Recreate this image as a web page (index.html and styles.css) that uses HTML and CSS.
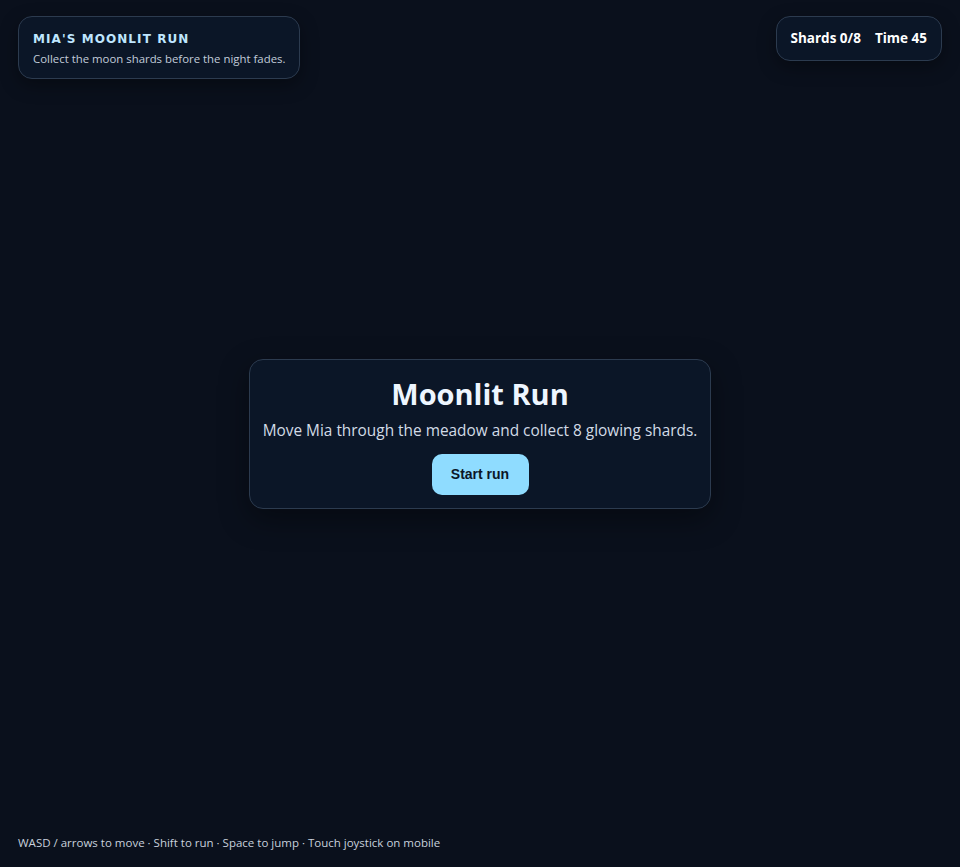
FILE: index.html
```html
<!DOCTYPE html>
<html lang="en">
<head>
<meta charset="utf-8">
<title>Mia's Moonlit Run</title>
<link rel="stylesheet" href="styles.css">
</head>
<body>
<div class="screen">
  <header class="hud">
    <div class="panel brand">
      <div class="brand-title">MIA'S MOONLIT RUN</div>
      <div class="brand-sub">Collect the moon shards before the night fades.</div>
    </div>
    <div class="panel stats">
      <span>Shards 0/8</span>
      <span>Time 45</span>
    </div>
  </header>
  <main class="stage">
    <div class="card">
      <h1 class="card-title">Moonlit Run</h1>
      <p class="card-text">Move Mia through the meadow and collect 8 glowing shards.</p>
      <button class="start">Start run</button>
    </div>
  </main>
  <footer class="help">WASD / arrows to move · Shift to run · Space to jump · Touch joystick on mobile</footer>
</div>
</body>
</html>
```
FILE: styles.css
```css
html, body {
  margin: 0;
  padding: 0;
  height: 100%;
  background: #0a101c;
  font-family: "Open Sans", "Noto Sans", sans-serif;
  color: #e6eef8;
}
.screen {
  height: 867px;
  display: grid;
  grid-template: 1fr / 1fr;
  box-sizing: border-box;
  padding: 16px 18px;
}
.screen > * {
  grid-area: 1 / 1;
}
.hud {
  display: flex;
  justify-content: space-between;
  align-items: flex-start;
  align-self: start;
}
.panel {
  background: #0b1627;
  border: 1px solid #2c3b4f;
  border-radius: 14px;
  box-shadow: 0 6px 18px rgba(0,0,0,0.35);
}
.brand {
  padding: 13px 14px 12px 14px;
}
.brand-title {
  font-family: "DejaVu Sans", sans-serif;
  font-weight: bold;
  font-size: 12px;
  letter-spacing: 0.09em;
  color: #bfe6ff;
  line-height: 18px;
}
.brand-sub {
  font-size: 11.4px;
  color: #c2ccda;
  margin-top: 3px;
  line-height: 15px;
  white-space: nowrap;
}
.stats {
  padding: 13px 14px;
  display: flex;
  gap: 14px;
  font-size: 13.5px;
  font-weight: 700;
  color: #ffffff;
  line-height: 17px;
  white-space: nowrap;
}
.stage {
  display: flex;
  align-items: center;
  justify-content: center;
  align-self: center;
}
.card {
  background: #0b1627;
  border: 1px solid #2c3b4f;
  border-radius: 14px;
  box-shadow: 0 10px 30px rgba(0,0,0,0.4);
  width: 462px;
  box-sizing: border-box;
  padding: 16px 10px 13px;
  text-align: center;
}
.card-title {
  margin: 0;
  font-size: 29px;
  font-weight: 700;
  color: #eef6ff;
  line-height: 36px;
}
.card-text {
  margin: 8px 0 12px;
  font-size: 15.4px;
  color: #d2dbe6;
  line-height: 22px;
  white-space: nowrap;
}
.start {
  font-family: "Liberation Sans", Arial, sans-serif;
  font-weight: bold;
  font-size: 14px;
  color: #0b1627;
  background: #8fdcff;
  border: none;
  border-radius: 10px;
  width: 97px;
  height: 41px;
  cursor: pointer;
}
.help {
  align-self: end;
  font-size: 11.5px;
  color: #c8d0dc;
  line-height: 16px;
  white-space: nowrap;
}
```
